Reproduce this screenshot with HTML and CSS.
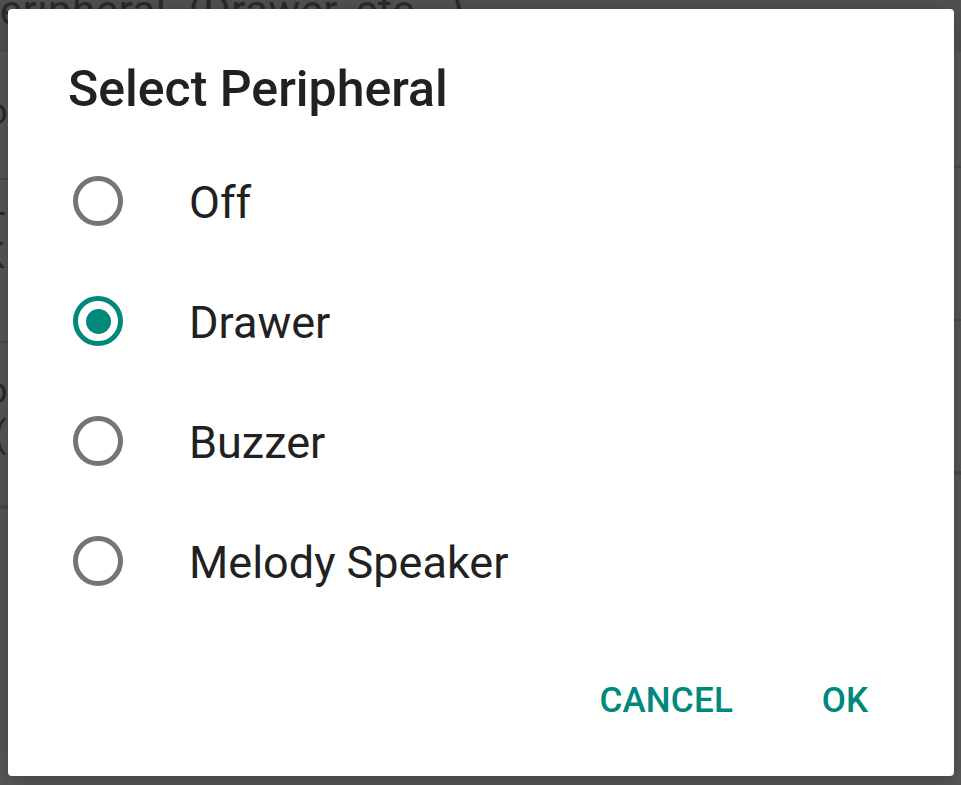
FILE: index.html
```html
<!DOCTYPE html>
<html lang="en">
<head>
<meta charset="utf-8">
<title>Select Peripheral</title>
<link rel="stylesheet" href="styles.css">
</head>
<body>
<div class="page">
  <div class="page-header"><span class="page-title">Peripheral&nbsp; (Drawer, etc...)</span></div>
  <div class="page-body">
    <div class="list list-left">
      <div class="row row-l1"><span class="frag frag-o">o</span></div>
      <div class="row row-l2"><span class="frag frag-t">T</span><span class="frag frag-k">K</span></div>
      <div class="row row-l3"><span class="frag frag-o">o</span><span class="frag frag-p">(</span></div>
      <div class="row row-l4"></div>
    </div>
    <div class="list list-right">
      <div class="row row-r1"></div>
      <div class="row row-r2"></div>
      <div class="row row-r3"></div>
      <div class="row row-r4"></div>
    </div>
  </div>
</div>

<div class="dialog" role="dialog" aria-labelledby="dlg-title">
  <h1 class="dialog-title" id="dlg-title">Select Peripheral</h1>
  <ul class="choices">
    <li class="choice"><span class="radio"></span><span class="choice-label">Off</span></li>
    <li class="choice"><span class="radio radio-checked"></span><span class="choice-label">Drawer</span></li>
    <li class="choice"><span class="radio"></span><span class="choice-label">Buzzer</span></li>
    <li class="choice"><span class="radio"></span><span class="choice-label">Melody Speaker</span></li>
  </ul>
  <div class="button-bar">
    <button class="btn btn-cancel">CANCEL</button>
    <button class="btn btn-ok">OK</button>
  </div>
</div>
</body>
</html>
```

FILE: styles.css
```css
html, body {
  margin: 0;
  padding: 0;
}

body {
  width: 961px;
  height: 785px;
  overflow: hidden;
  background: #585858;
  font-family: "Roboto", "Noto Sans", sans-serif;
  position: relative;
}

/* ---------- dimmed page behind the dialog ---------- */
.page {
  height: 785px;
  display: flex;
  flex-direction: column;
}

.page-header {
  height: 52px;
  background: #515151;
  overflow: hidden;
  white-space: nowrap;
}

.page-title {
  display: block;
  font-size: 42px;
  line-height: 42px;
  letter-spacing: 0.5px;
  margin-top: -10px;
  margin-left: -27px;
  color: #2a2a2a;
}

.page-body {
  flex: 1;
  display: flex;
  justify-content: space-between;
}

.list {
  display: flex;
  flex-direction: column;
}

.list-left {
  width: 12px;
  overflow: hidden;
}

.list-right {
  width: 10px;
}

.row {
  border-bottom: 2px solid #4c4c4c;
  overflow: hidden;
}

.row-l1 { height: 126px; }
.row-l2 { height: 161px; }
.row-l3 { height: 162px; }
.row-r1 { height: 114px; }
.row-r2 { height: 151px; }
.row-r3 { height: 150px; }

.frag {
  display: block;
  font-size: 36px;
  line-height: 36px;
  color: #2a2a2a;
  margin-left: -13px;
}

.row-l1 .frag-o { margin-top: 42px; }
.row-l2 .frag-t { margin-top: 28px; margin-left: -16px; }
.row-l2 .frag-k { margin-top: -6px; margin-left: -18px; }
.row-l3 .frag-o { margin-top: 30px; }
.row-l3 .frag-p { margin-top: 8px; margin-left: -6px; }

/* ---------- dialog ---------- */
.dialog {
  position: absolute;
  left: 8px;
  top: 9px;
  width: 946px;
  height: 767px;
  box-sizing: border-box;
  background: #ffffff;
  border-radius: 4px;
  box-shadow: 0 6px 24px rgba(0, 0, 0, 0.25);
  padding-top: 52px;
  display: flex;
  flex-direction: column;
}

.dialog-title {
  margin: 0 0 24px 60px;
  font-size: 50px;
  line-height: 56px;
  font-weight: 500;
  color: #212121;
}

.choices {
  list-style: none;
  margin: 0;
  padding: 0;
}

.choice {
  height: 120px;
  display: flex;
  align-items: center;
  padding-left: 65px;
  gap: 66px;
}

.radio {
  width: 50px;
  height: 50px;
  box-sizing: border-box;
  border: 5px solid #757575;
  border-radius: 50%;
  display: flex;
  align-items: center;
  justify-content: center;
  flex: none;
}

.radio-checked {
  border-color: #00897b;
}

.radio-checked::after {
  content: "";
  width: 25px;
  height: 25px;
  border-radius: 50%;
  background: #00897b;
}

.choice-label {
  font-size: 45px;
  line-height: 52px;
  padding-top: 3px;
  color: #212121;
}

.button-bar {
  display: flex;
  justify-content: flex-end;
  gap: 12px;
  padding: 34px 29px 0 0;
}

.btn {
  height: 90px;
  min-width: 160px;
  padding: 0 20px;
  border: none;
  background: transparent;
  font-family: "Roboto", "Noto Sans", sans-serif;
  font-size: 35px;
  font-weight: 500;
  letter-spacing: 0.2px;
  color: #00897b;
  text-align: center;
}
```
